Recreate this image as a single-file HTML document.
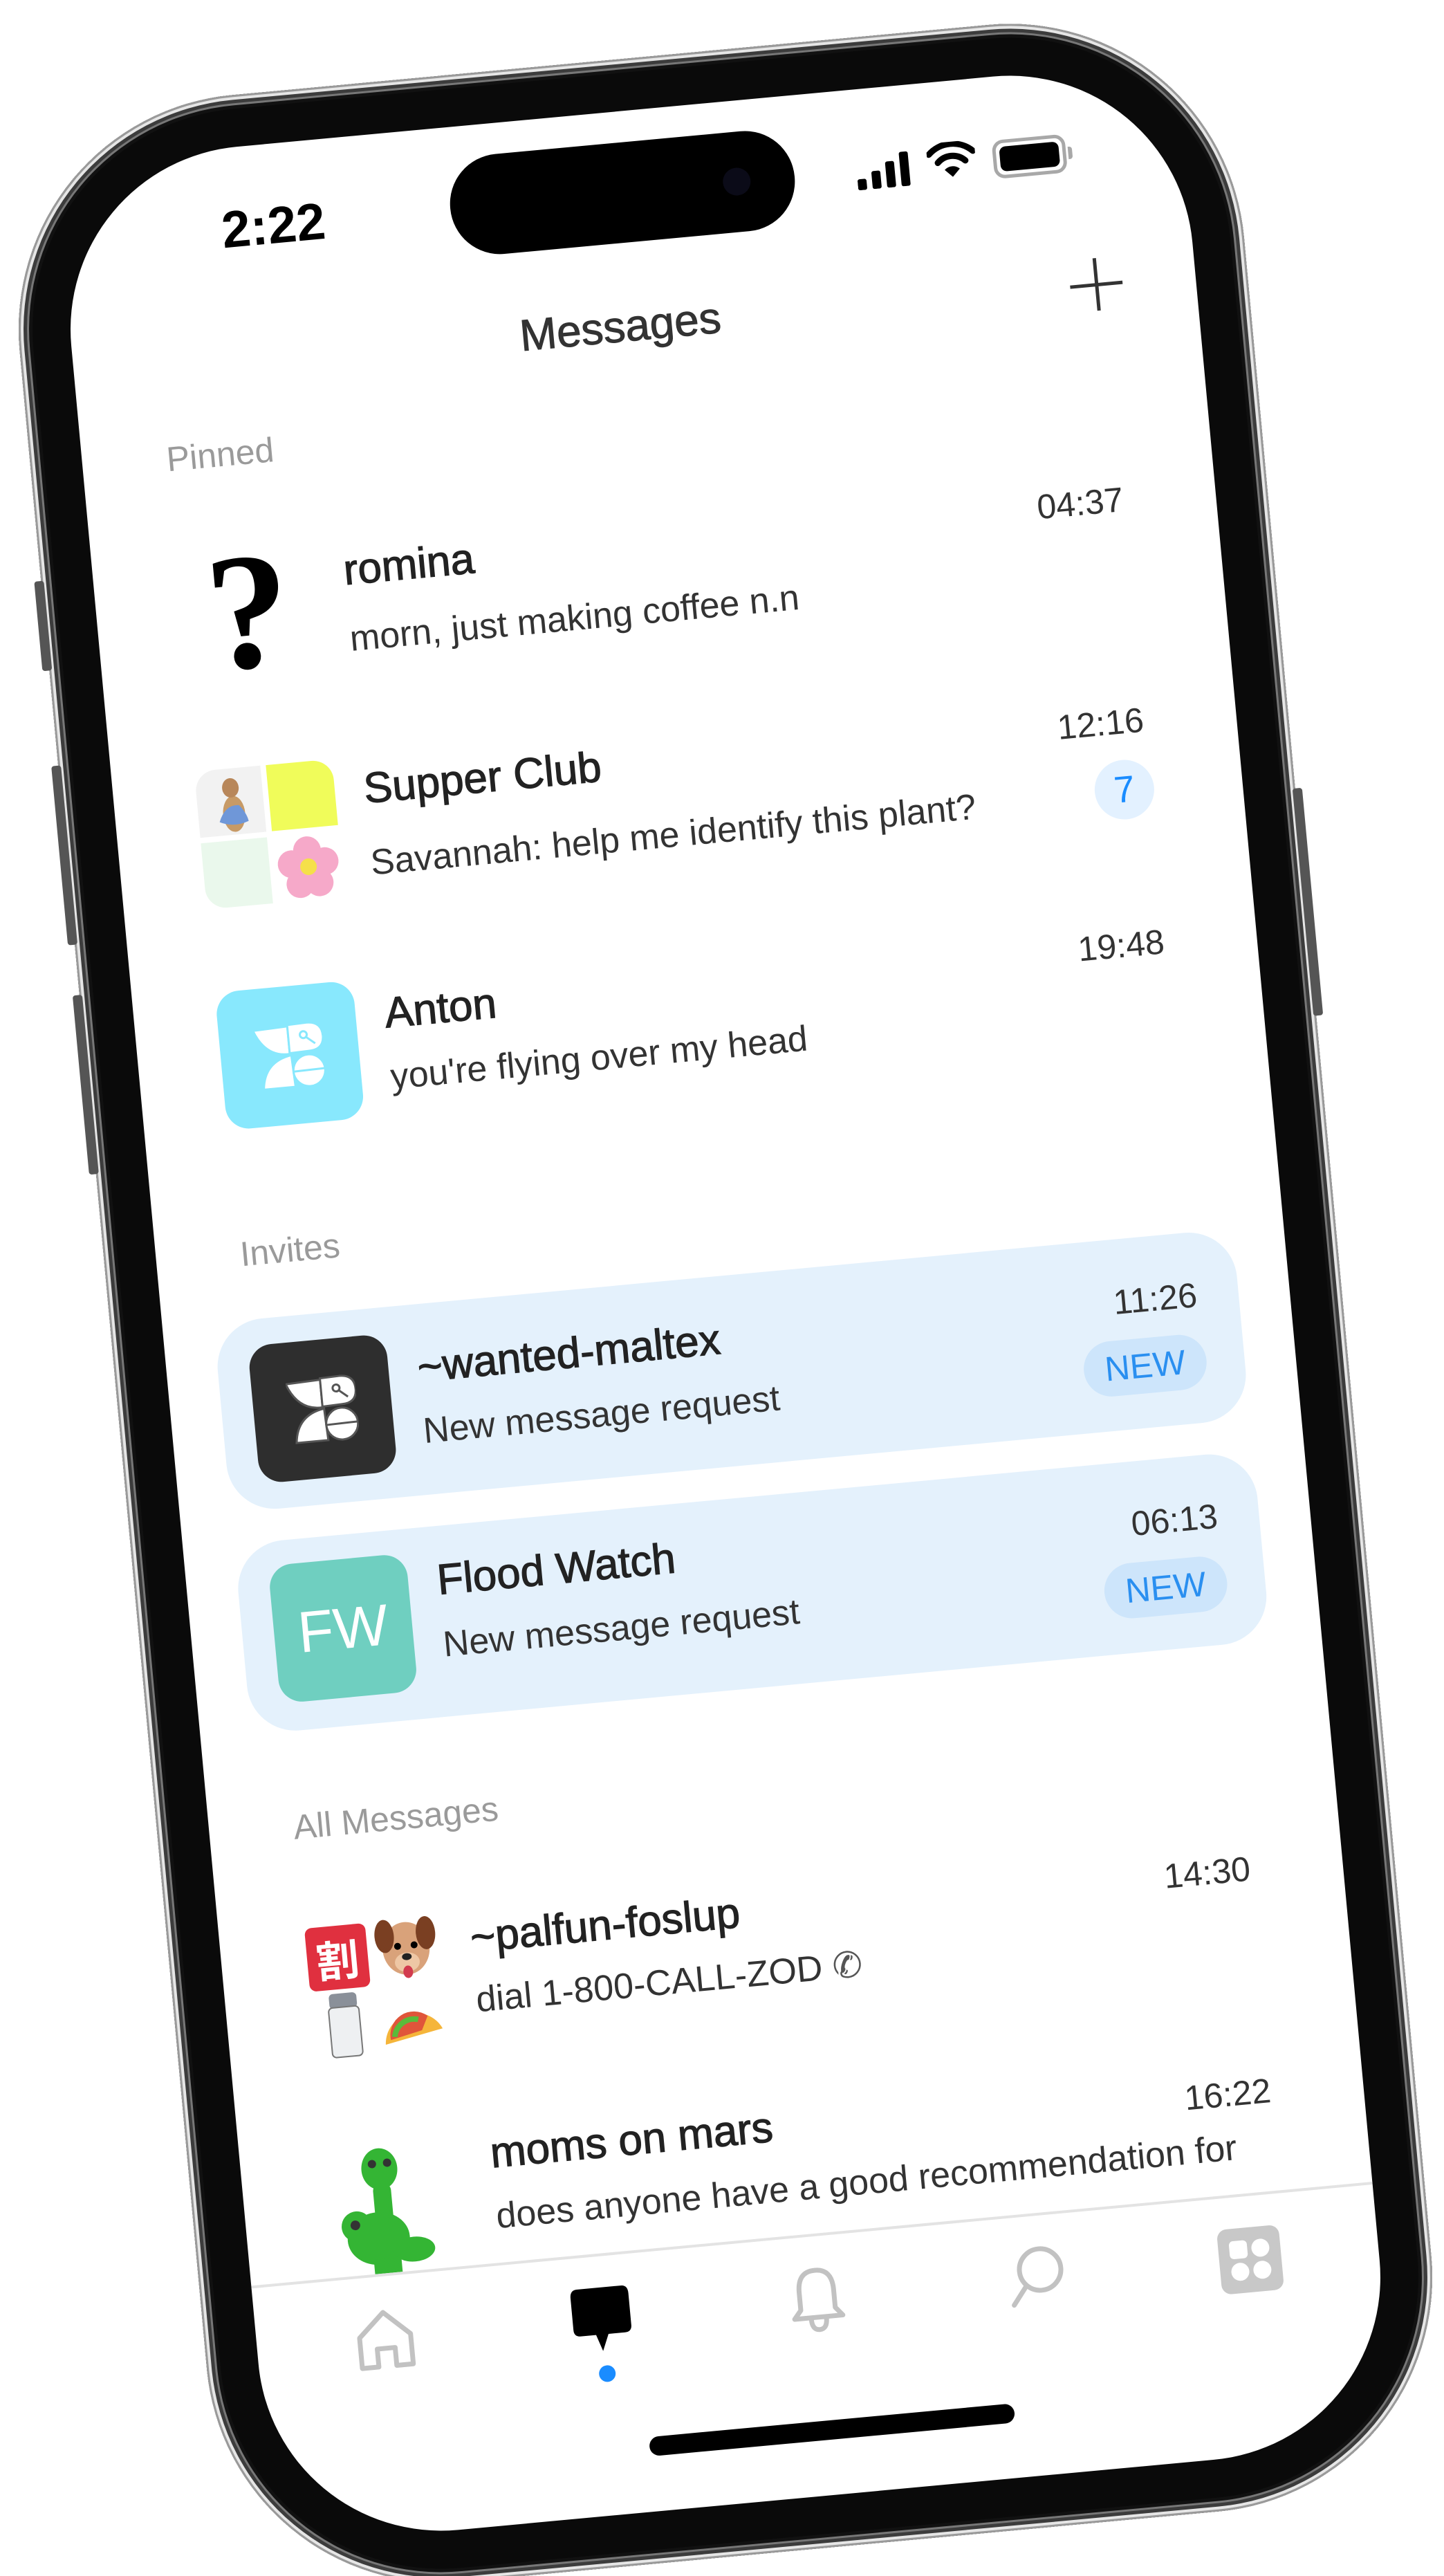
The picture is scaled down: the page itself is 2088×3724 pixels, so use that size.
<!DOCTYPE html>
<html><head><meta charset="utf-8">
<style>
html,body{margin:0;padding:0;background:#fff;width:2088px;height:3724px;overflow:hidden;position:relative}
*{box-sizing:border-box}
#phone{position:absolute;left:160px;top:79px;width:1778px;height:3610px;transform:rotate(-5.3deg);transform-origin:50% 50%;
 border-radius:340px;background:#0a0a0a;
 box-shadow:inset 0 0 0 3px #9a9a9a, inset 0 0 0 7px #e6e6e6, inset 0 0 0 12px #3c3c3c, inset 0 0 0 15px #777, inset 0 0 0 20px #111;}
.btn{position:absolute;width:14px;background:#555;border-radius:4px}
#screen{position:absolute;left:75px;top:75px;width:1628px;height:3460px;border-radius:265px;background:#fff;overflow:hidden;
 font-family:"Liberation Sans","Noto Sans CJK SC",sans-serif;color:#222}
.a{position:absolute;white-space:nowrap;line-height:1}
.lbl{font-size:50px;color:#9a9a9a}
.tt{font-size:62px;color:#222;-webkit-text-stroke:1.2px #222}
.pv{font-size:52px;color:#333}
.tm{font-size:50px;color:#333;right:134px}
.av{position:absolute;width:200px;height:200px;left:120px}
.card{position:absolute;left:74px;width:1480px;height:276px;background:#e4f1fc;border-radius:70px}
.new{position:absolute;width:178px;height:80px;border-radius:40px;background:#cde5fb;color:#2a8ff0;font-size:50px;line-height:80px;text-align:center}
#list{position:absolute;left:0;top:0;width:1628px;height:3081px;overflow:hidden}
</style></head><body>
<div id="phone">
 <div class="btn" style="left:-10px;top:674px;height:130px"></div>
 <div class="btn" style="left:-10px;top:942px;height:260px"></div>
 <div class="btn" style="left:-10px;top:1275px;height:260px"></div>
 <div class="btn" style="right:-10px;top:1140px;height:330px"></div>
 <div id="screen">
  <!-- status bar -->
  <div class="a" style="left:232px;top:81px;font-size:75px;font-weight:bold;color:#000">2:22</div>
  <div style="position:absolute;left:564px;top:45px;width:500px;height:145px;border-radius:72px;background:#000"></div>
  <div style="position:absolute;left:960px;top:97px;width:40px;height:40px;border-radius:20px;background:#0b0b18"></div>
  <svg style="position:absolute;left:1154px;top:94px" width="80" height="52" viewBox="0 0 80 52">
   <rect x="0" y="36" width="13" height="16" rx="3"/><rect x="21" y="26" width="13" height="26" rx="3"/><rect x="42" y="14" width="13" height="38" rx="3"/><rect x="63" y="2" width="13" height="50" rx="3"/></svg>
  <svg style="position:absolute;left:1257px;top:88px" width="70" height="52" viewBox="0 0 70 52">
   <path d="M3 16 A46 46 0 0 1 67 16" fill="none" stroke="#000" stroke-width="9" stroke-linecap="round"/>
   <path d="M15 29 A28 28 0 0 1 55 29" fill="none" stroke="#000" stroke-width="9" stroke-linecap="round"/>
   <path d="M24 40 L35 51 L46 40 A16 16 0 0 0 24 40 Z" fill="#000"/></svg>
  <div style="position:absolute;left:1352px;top:92px;width:106px;height:56px;border:5px solid #a8a8a8;border-radius:16px;padding:5px"><div style="width:100%;height:100%;background:#000;border-radius:9px"></div></div>
  <div style="position:absolute;left:1461px;top:111px;width:6px;height:18px;background:#a8a8a8;border-radius:0 4px 4px 0"></div>
  <!-- header -->
  <div class="a" style="left:593px;top:278px;width:400px;text-align:center;font-size:64px;color:#333;-webkit-text-stroke:1px #333">Messages</div>
  <div style="position:absolute;left:1446px;top:311px;width:76px;height:5px;background:#333"></div>
  <div style="position:absolute;left:1482px;top:275px;width:5px;height:76px;background:#333"></div>

  <div id="list">
   <div class="a lbl" style="left:122px;top:416px">Pinned</div>
   <!-- romina -->
   <div class="av" style="top:570px;text-align:center;font:bold 240px/200px 'Liberation Serif',serif;color:#000">?</div>
   <div class="a tt" style="left:362px;top:594px">romina</div>
   <div class="a pv" style="left:362px;top:698px">morn, just making coffee n.n</div>
   <div class="a tm" style="top:601px">04:37</div>
   <!-- supper -->
   <div class="av" style="top:894px">
    <div style="position:absolute;left:0;top:0;width:96px;height:96px;border-radius:30px 0 0 0;background:#f2f2f2"></div>
    <svg style="position:absolute;left:20px;top:6px" width="60" height="88" viewBox="0 0 60 88"><ellipse cx="32" cy="60" rx="16" ry="26" fill="#c79a66"/><ellipse cx="30" cy="22" rx="12" ry="14" fill="#b8875a"/><path d="M10 70 Q20 45 40 48 Q50 60 52 72 Q30 80 10 70Z" fill="#6f97d8"/></svg>
    <div style="position:absolute;left:104px;top:0;width:96px;height:96px;border-radius:0 30px 0 0;background:#f0fc5a"></div>
    <div style="position:absolute;left:0;top:104px;width:96px;height:96px;border-radius:0 0 0 30px;background:#eaf8ec"></div>
    <svg style="position:absolute;left:104px;top:104px" width="96" height="96" viewBox="0 0 96 96">
     <g fill="#f6a9c9"><circle cx="48" cy="24" r="20"/><circle cx="72" cy="42" r="20"/><circle cx="62" cy="72" r="20"/><circle cx="34" cy="72" r="20"/><circle cx="24" cy="42" r="20"/></g>
     <circle cx="48" cy="48" r="12" fill="#f5e04a"/></svg>
   </div>
   <div class="a tt" style="left:362px;top:911px">Supper Club</div>
   <div class="a pv" style="left:362px;top:1023px">Savannah: help me identify this plant?</div>
   <div class="a tm" style="top:921px">12:16</div>
   <div style="position:absolute;left:1414px;top:1001px;width:86px;height:86px;border-radius:43px;background:#e3f1ff;color:#1a8cff;font-size:54px;line-height:86px;text-align:center">7</div>
   <!-- anton -->
   <div class="av" style="top:1215px;background:#88e8fd;border-radius:34px">
    <svg style="position:absolute;left:50px;top:50px" width="100" height="100" viewBox="0 0 100 100" fill="#fff" stroke="#88e8fd" stroke-width="3">
     <path d="M0 10 L50 8 L50 48 Q15 50 0 10Z"/><path d="M50 6 L78 5 Q100 5 100 26 Q100 46 78 46 L50 47Z"/>
     <path d="M8 96 Q12 56 52 50 L54 96Z"/><circle cx="76" cy="74" r="23"/><path d="M53 74 L99 73" fill="none"/>
     <circle cx="72" cy="22" r="5" fill="none" stroke-width="3"/><path d="M76 26 L88 36" fill="none"/></svg>
   </div>
   <div class="a tt" style="left:362px;top:1237px">Anton</div>
   <div class="a pv" style="left:362px;top:1334px">you're flying over my head</div>
   <div class="a tm" style="top:1243px">19:48</div>

   <div class="a lbl" style="left:122px;top:1570px">Invites</div>
   <!-- card1 -->
   <div class="card" style="top:1690px"></div>
   <div class="av" style="top:1728px;background:#2e2e2e;border-radius:34px">
    <svg style="position:absolute;left:50px;top:50px" width="100" height="100" viewBox="0 0 100 100" fill="#fff" stroke="#555" stroke-width="3">
     <path d="M0 10 L50 8 L50 48 Q15 50 0 10Z"/><path d="M50 6 L78 5 Q100 5 100 26 Q100 46 78 46 L50 47Z"/>
     <path d="M8 96 Q12 56 52 50 L54 96Z"/><circle cx="76" cy="74" r="23"/><path d="M53 74 L99 73" fill="none"/>
     <circle cx="72" cy="22" r="5" fill="none"/><path d="M76 26 L88 36" fill="none"/></svg>
   </div>
   <div class="a tt" style="left:362px;top:1751px">~wanted-maltex</div>
   <div class="a pv" style="left:362px;top:1848px">New message request</div>
   <div class="a tm" style="top:1756px">11:26</div>
   <div class="new" style="left:1321px;top:1836px">NEW</div>
   <!-- card2 -->
   <div class="card" style="top:2012px"></div>
   <div class="av" style="top:2047px;background:#6fcfc0;border-radius:34px;color:#fff;font-size:84px;line-height:200px;text-align:center">FW</div>
   <div class="a tt" style="left:362px;top:2060px">Flood Watch</div>
   <div class="a pv" style="left:362px;top:2158px">New message request</div>
   <div class="a tm" style="top:2077px">06:13</div>
   <div class="new" style="left:1321px;top:2158px">NEW</div>

   <div class="a lbl" style="left:122px;top:2402px">All Messages</div>
   <!-- palfun -->
   <div class="av" style="top:2566px">
    <div style="position:absolute;left:4px;top:8px;width:88px;height:92px;border-radius:10px;background:#e0303f;color:#fff;font:bold 62px/92px 'Noto Sans CJK JP',sans-serif;text-align:center">割</div>
    <svg style="position:absolute;left:100px;top:0" width="96" height="100" viewBox="0 0 96 100"><ellipse cx="48" cy="50" rx="34" ry="38" fill="#d9a27a"/><ellipse cx="18" cy="30" rx="14" ry="24" fill="#7a3f22"/><ellipse cx="78" cy="30" rx="14" ry="24" fill="#7a3f22"/><ellipse cx="48" cy="70" rx="18" ry="14" fill="#eec7a5"/><circle cx="36" cy="46" r="5"/><circle cx="60" cy="46" r="5"/><ellipse cx="48" cy="62" rx="7" ry="5" fill="#222"/><ellipse cx="48" cy="84" rx="7" ry="9" fill="#d23b4e"/></svg>
    <svg style="position:absolute;left:20px;top:104px" width="60" height="96" viewBox="0 0 60 96"><rect x="10" y="2" width="40" height="22" rx="6" fill="#8a9099"/><rect x="8" y="22" width="44" height="72" rx="6" fill="#eef0f2" stroke="#777" stroke-width="2"/></svg>
    <svg style="position:absolute;left:100px;top:110px" width="96" height="80" viewBox="0 0 96 80"><path d="M6 76 A44 44 0 0 1 90 60 Z" fill="#f5b53a"/><path d="M14 70 A34 34 0 0 1 70 40 L60 60Z" fill="#e0553a"/><path d="M20 66 A28 28 0 0 1 56 44" stroke="#5bbb3a" stroke-width="8" fill="none"/></svg>
   </div>
   <div class="a tt" style="left:362px;top:2579px">~palfun-foslup</div>
   <div class="a pv" style="left:362px;top:2674px">dial 1-800-CALL-ZOD <span style="color:#555">✆</span></div>
   <div class="a tm" style="top:2589px">14:30</div>
   <!-- moms -->
   <svg class="av" style="top:2890px" viewBox="0 0 200 200">
    <g fill="#34b534"><ellipse cx="80" cy="40" rx="26" ry="30"/><rect x="68" y="60" width="26" height="90" rx="12"/><ellipse cx="70" cy="140" rx="45" ry="38"/><ellipse cx="40" cy="120" rx="22" ry="22"/><ellipse cx="120" cy="160" rx="30" ry="18"/><rect x="60" y="170" width="40" height="30"/></g>
    <circle cx="70" cy="32" r="6" fill="#333"/><circle cx="92" cy="32" r="6" fill="#333"/><circle cx="38" cy="118" r="7" fill="#333"/></svg>
   <div class="a tt" style="left:362px;top:2892px">moms on mars</div>
   <div class="a pv" style="left:362px;top:2988px">does anyone have a good recommendation for</div>
   <div class="a tm" style="top:2911px">16:22</div>
  </div>
  <div style="position:absolute;left:0;top:3081px;width:1628px;height:4px;background:#e3e3e3"></div>
  <!-- tab bar -->
  <svg style="position:absolute;left:141px;top:3131px" width="90" height="90" viewBox="0 0 90 90" fill="none" stroke="#c2c2c2" stroke-width="7" stroke-linejoin="round">
   <path d="M8 40 L45 6 L82 40 L82 84 L58 84 L58 58 L32 58 L32 84 L8 84 Z"/></svg>
  <svg style="position:absolute;left:454px;top:3126px" width="92" height="100" viewBox="0 0 92 100">
   <path d="M14 4 L78 4 Q88 4 88 16 L88 62 Q88 72 78 72 L54 72 L44 96 L36 72 L14 72 Q4 72 4 62 L4 16 Q4 4 14 4Z" fill="#000"/></svg>
  <div style="position:absolute;left:489px;top:3243px;width:24px;height:24px;border-radius:12px;background:#1a8cff"></div>
  <svg style="position:absolute;left:768px;top:3128px" width="90" height="96" viewBox="0 0 90 96" fill="none" stroke="#c2c2c2" stroke-width="7" stroke-linejoin="round">
   <path d="M45 6 Q20 6 20 36 L20 62 L10 74 L80 74 L70 62 L70 36 Q70 6 45 6Z"/><path d="M34 76 Q34 92 45 92 Q56 92 56 76"/></svg>
  <svg style="position:absolute;left:1088px;top:3125px" width="90" height="94" viewBox="0 0 90 94" fill="none" stroke="#c2c2c2" stroke-width="7" stroke-linecap="round">
   <circle cx="50" cy="38" r="30"/><path d="M28 60 L8 86"/></svg>
  <div style="position:absolute;left:1397px;top:3130px;width:90px;height:94px;border-radius:14px;background:#c8c8c8"></div>
  <div style="position:absolute;left:1413px;top:3148px;width:26px;height:26px;border-radius:6px;background:#fff"></div>
  <div style="position:absolute;left:1445px;top:3148px;width:26px;height:26px;border-radius:13px;background:#fff"></div>
  <div style="position:absolute;left:1413px;top:3180px;width:26px;height:26px;border-radius:13px;background:#fff"></div>
  <div style="position:absolute;left:1445px;top:3180px;width:26px;height:26px;border-radius:13px;background:#fff"></div>
  <div style="position:absolute;left:552px;top:3352px;width:530px;height:28px;border-radius:14px;background:#000"></div>
 </div>
</div>
</body></html>
